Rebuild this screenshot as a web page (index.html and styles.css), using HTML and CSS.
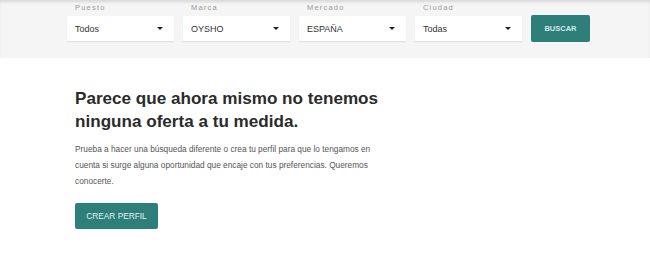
FILE: index.html
```html
<!DOCTYPE html>
<html>
    <head>
        <meta charset="UTF-8"/>
        <title>Ofertas</title>
        <link rel="stylesheet" href="styles.css">
    </head>

    <body>
        <div class="search-bar">
            <div class="field">
                <label>Puesto</label>
                <div class="select"><span>Todos</span><i class="caret"></i></div>
            </div>
            <div class="field">
                <label>Marca</label>
                <div class="select"><span>OYSHO</span><i class="caret"></i></div>
            </div>
            <div class="field">
                <label>Mercado</label>
                <div class="select"><span>ESPAÑA</span><i class="caret"></i></div>
            </div>
            <div class="field">
                <label>Ciudad</label>
                <div class="select"><span>Todas</span><i class="caret"></i></div>
            </div>
            <button class="btn btn-search">BUSCAR</button>
        </div>

        <div class="empty">
            <h2>Parece que ahora mismo no tenemos<br>ninguna oferta a tu medida.</h2>
            <p>Prueba a hacer una búsqueda diferente o crea tu perfil para que lo tengamos en cuenta si surge alguna oportunidad que encaje con tus preferencias. Queremos conocerte.</p>
            <button class="btn btn-profile">CREAR PERFIL</button>
        </div>
    </body>
</html>
```

FILE: styles.css
```css
body{
    margin:0;
    font-family:"Liberation Sans", Arial, sans-serif;
    background:#fff;
}

.search-bar{
    display:flex;
    align-items:flex-end;
    gap:9px;
    height:58px;
    box-sizing:border-box;
    padding:2px 0 17px 67px;
    background:#f5f5f5;
    box-shadow:inset 0 3px 3px -1px rgba(0,0,0,.12);
}
.field{
    display:flex;
    flex-direction:column;
}
.field label{
    font-size:7.5px;
    letter-spacing:1.2px;
    color:#999;
    padding-left:8px;
    height:13px;
}
.select{
    display:flex;
    align-items:center;
    justify-content:space-between;
    width:107px;
    height:25px;
    box-sizing:border-box;
    padding:0 11px 0 8px;
    background:#fff;
    box-shadow:0 1px 1px rgba(0,0,0,.08);
    font-size:9px;
    color:#333;
}
.caret{
    width:0;
    height:0;
    border-left:3px solid transparent;
    border-right:3px solid transparent;
    border-top:3px solid #222;
}

.btn{
    border:none;
    background:#2e7e79;
    color:#fff;
    font-family:inherit;
    border-radius:2px;
    cursor:pointer;
}
.btn-search{
    width:59px;
    height:27px;
    margin-bottom:-1px;
    font-size:7.5px;
    font-weight:bold;
    color:#d5e9e7;
}

.empty{
    padding:29px 0 0 75px;
}
.empty h2{
    margin:0;
    font-size:17.1px;
    line-height:23px;
    font-weight:bold;
    color:#2b2b2b;
}
.empty p{
    margin:8px 0 0;
    width:300px;
    font-size:8.3px;
    line-height:16px;
    color:#555;
}
.btn-profile{
    margin-top:14px;
    width:83px;
    height:26px;
    font-size:8.3px;
    color:#e8f2f1;
}
```
